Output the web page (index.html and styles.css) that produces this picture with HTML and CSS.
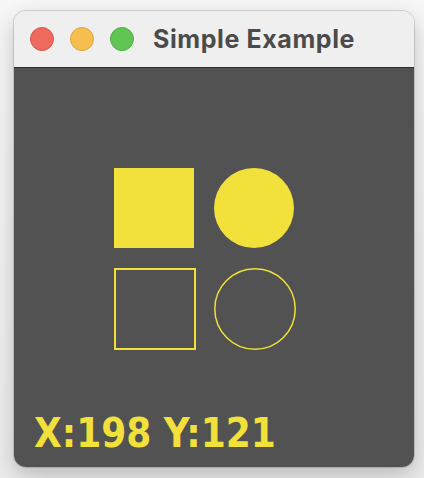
FILE: index.html
```html
<!DOCTYPE html>
<html>
<head>
<meta charset="utf-8">
<link rel="stylesheet" href="styles.css">
</head>
<body>
<div class="window">
  <div class="titlebar">
    <span class="light red"></span>
    <span class="light yellow"></span>
    <span class="light green"></span>
    <span class="title">Simple Example</span>
  </div>
  <div class="content">
    <div class="shapes">
      <div class="shape fill-square"></div>
      <div class="shape fill-circle"></div>
      <div class="shape line-square"></div>
      <svg class="shape line-circle" width="82" height="82" viewBox="0 0 82 82">
        <circle cx="41" cy="41" r="40.2" fill="none" stroke="#f1df3a" stroke-width="1.5"/>
      </svg>
    </div>
    <div class="coords">X:198 Y:121</div>
  </div>
</div>
</body>
</html>
```
FILE: styles.css
```css
html, body {
  margin: 0;
  padding: 0;
}
body {
  width: 424px;
  height: 478px;
  background: linear-gradient(#f7f7f7, #ececec);
  overflow: hidden;
  padding: 11px 0 0 14px;
  box-sizing: border-box;
}
.window {
  width: 400px;
  height: 456px;
  border-radius: 12px;
  overflow: hidden;
  box-shadow: 0 0 0 1px rgba(0,0,0,0.13), 0 8px 22px rgba(0,0,0,0.22);
  display: flex;
  flex-direction: column;
}
.titlebar {
  height: 56px;
  background: #efefef;
  border-bottom: 1px solid #2e2e2e;
  display: flex;
  align-items: center;
  padding-left: 16px;
  gap: 16px;
  flex: none;
  box-sizing: content-box;
}
.light {
  width: 24px;
  height: 24px;
  border-radius: 50%;
  box-sizing: border-box;
  flex: none;
}
.red { background: #ee6a5f; border: 1px solid #d9564b; }
.yellow { background: #f5be4f; border: 1px solid #dfa53a; }
.green { background: #61c554; border: 1px solid #4fae42; }
.title {
  margin-left: 3px;
  font-family: Inter, "Liberation Sans", sans-serif;
  font-weight: 700;
  font-size: 25px;
  color: #4b4b4b;
  letter-spacing: 0.6px;
}
.content {
  flex: 1;
  background: #525252;
  display: flex;
  flex-direction: column;
  padding: 100px 0 14px 20px;
}
.shapes {
  display: grid;
  grid-template-columns: 82px 82px;
  grid-template-rows: 80px 82px;
  column-gap: 18px;
  row-gap: 20px;
  margin-left: 80px;
}
.fill-square {
  width: 80px;
  height: 80px;
  background: #f2e03b;
}
.fill-circle {
  width: 80px;
  height: 80px;
  border-radius: 50%;
  background: #f2e03b;
}
.line-square {
  width: 82px;
  height: 82px;
  border: 2px solid #f2e03b;
  box-sizing: border-box;
}
.line-circle {
  display: block;
}
.coords {
  margin-top: auto;
  font-family: "DejaVu Sans Condensed", "DejaVu Sans", sans-serif;
  font-stretch: condensed;
  font-weight: 700;
  font-size: 40px;
  line-height: 1;
  color: #f2e03b;
}
```
